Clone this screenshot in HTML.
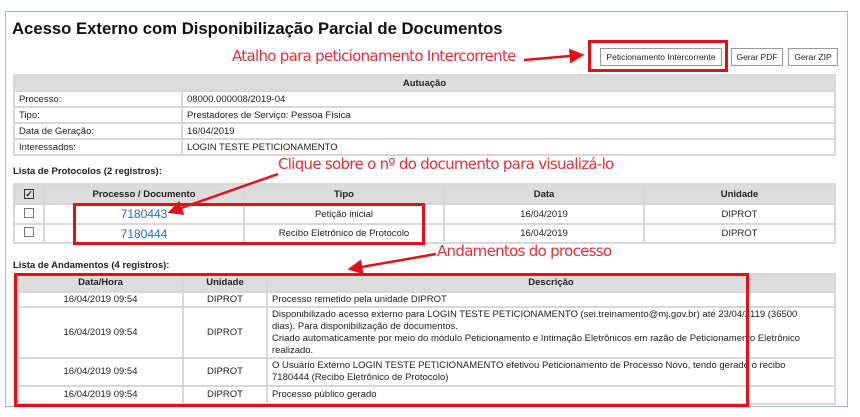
<!DOCTYPE html>
<html><head><style>
body{margin:0;width:860px;height:417px;background:#fff;position:relative;overflow:hidden;font-family:"Liberation Sans",Arial,sans-serif;color:#222}
.a{position:absolute}
.frame{left:5px;top:11px;width:843px;height:396px;border:1px solid #9db8e0;box-sizing:border-box}
.t{font-size:16.7px;font-weight:bold;left:12px;top:19px;color:#111}
.red{color:#e0313a;font-size:15px;font-family:"DejaVu Sans",sans-serif;letter-spacing:-.7px}
.box{border:3px solid #e3101a;box-sizing:border-box}
table{border-collapse:collapse;font-size:9.5px;position:absolute}
td,th{border:2px solid #d8d8d8;padding:0 4px;white-space:nowrap}
th{background:#dcdcdc;font-weight:bold}
.btn{border:1px solid #999;font-size:8.5px;background:#fff;text-align:center;line-height:16px;box-sizing:border-box}
.lbl{font-size:9.5px;font-weight:bold}
.c{text-align:center}
.cb{display:inline-block;width:8px;height:8px;border:1px solid #777}
a{color:#2a6fb8;text-decoration:none;font-size:12px}
</style></head><body>
<div class="a frame"></div>
<div class="a t">Acesso Externo com Disponibilização Parcial de Documentos</div>
<div class="a red" style="left:232px;top:47px">Atalho para peticionamento Intercorrente</div>
<div class="a box" style="left:588px;top:40px;width:140px;height:32px"></div>
<div class="a btn" style="left:600px;top:48px;width:122px;height:18px">Peticionamento Intercorrente</div>
<div class="a btn" style="left:731px;top:48px;width:52px;height:18px">Gerar PDF</div>
<div class="a btn" style="left:788px;top:48px;width:50px;height:18px">Gerar ZIP</div>

<table style="left:13px;top:74px;width:823px">
<tr style="height:16px"><th colspan="2">Autuação</th></tr>
<tr style="height:16px"><td style="width:158px">Processo:</td><td>08000.000008/2019-04</td></tr>
<tr style="height:16px"><td>Tipo:</td><td>Prestadores de Serviço: Pessoa Física</td></tr>
<tr style="height:16px"><td>Data de Geração:</td><td>16/04/2019</td></tr>
<tr style="height:16px"><td>Interessados:</td><td>LOGIN TESTE PETICIONAMENTO</td></tr>
</table>

<div class="a lbl" style="left:13px;top:166px">Lista de Protocolos (2 registros):</div>
<div class="a red" style="left:278px;top:155px">Clique sobre o nº do documento para visualizá-lo</div>
<table style="left:13px;top:183px;width:823px">
<tr style="height:20px"><th style="width:20px"><span class="cb" style="border-color:#333;font-size:9px;line-height:8px">✓</span></th><th style="width:190px">Processo / Documento</th><th style="width:190px">Tipo</th><th style="width:190px">Data</th><th>Unidade</th></tr>
<tr style="height:20px"><td class="c"><span class="cb"></span></td><td class="c"><a>7180443</a></td><td class="c">Petição inicial</td><td class="c">16/04/2019</td><td class="c">DIPROT</td></tr>
<tr style="height:19px"><td class="c"><span class="cb"></span></td><td class="c"><a>7180444</a></td><td class="c">Recibo Eletrônico de Protocolo</td><td class="c">16/04/2019</td><td class="c">DIPROT</td></tr>
</table>
<div class="a box" style="left:73px;top:203px;width:352px;height:42px"></div>

<div class="a lbl" style="left:13px;top:260px">Lista de Andamentos (4 registros):</div>
<div class="a red" style="left:437px;top:242px">Andamentos do processo</div>
<table style="left:17px;top:273px;width:819px;line-height:12px">
<tr style="height:18px"><th style="width:155px">Data/Hora</th><th style="width:74px">Unidade</th><th>Descrição</th></tr>
<tr style="height:15px"><td class="c">16/04/2019 09:54</td><td class="c">DIPROT</td><td>Processo remetido pela unidade DIPROT</td></tr>
<tr style="height:51px"><td class="c">16/04/2019 09:54</td><td class="c">DIPROT</td><td>Disponibilizado acesso externo para LOGIN TESTE PETICIONAMENTO (sei.treinamento@mj.gov.br) até 23/04/2119 (36500<br>dias). Para disponibilização de documentos.<br>Criado automaticamente por meio do módulo Peticionamento e Intimação Eletrônicos em razão de Peticionamento Eletrônico<br>realizado.</td></tr>
<tr style="height:28px"><td class="c">16/04/2019 09:54</td><td class="c">DIPROT</td><td>O Usuário Externo LOGIN TESTE PETICIONAMENTO efetivou Peticionamento de Processo Novo, tendo gerado o recibo<br>7180444 (Recibo Eletrônico de Protocolo)</td></tr>
<tr style="height:18px"><td class="c">16/04/2019 09:54</td><td class="c">DIPROT</td><td>Processo público gerado</td></tr>
</table>
<div class="a box" style="left:14px;top:273px;width:735px;height:134px"></div>

<svg class="a" style="left:0;top:0" width="860" height="417">
<defs><marker id="m" markerWidth="6" markerHeight="6" refX="5" refY="3" orient="auto"><path d="M0,0 L6,3 L0,6z" fill="#e3101a"/></marker></defs>
<g stroke="#e3101a" stroke-width="2.5" fill="none" marker-end="url(#m)">
<line x1="524" y1="60" x2="582" y2="55"/>
<line x1="278" y1="174" x2="170" y2="212"/>
<line x1="436" y1="254" x2="350" y2="269"/>
</g></svg>
</body></html>
